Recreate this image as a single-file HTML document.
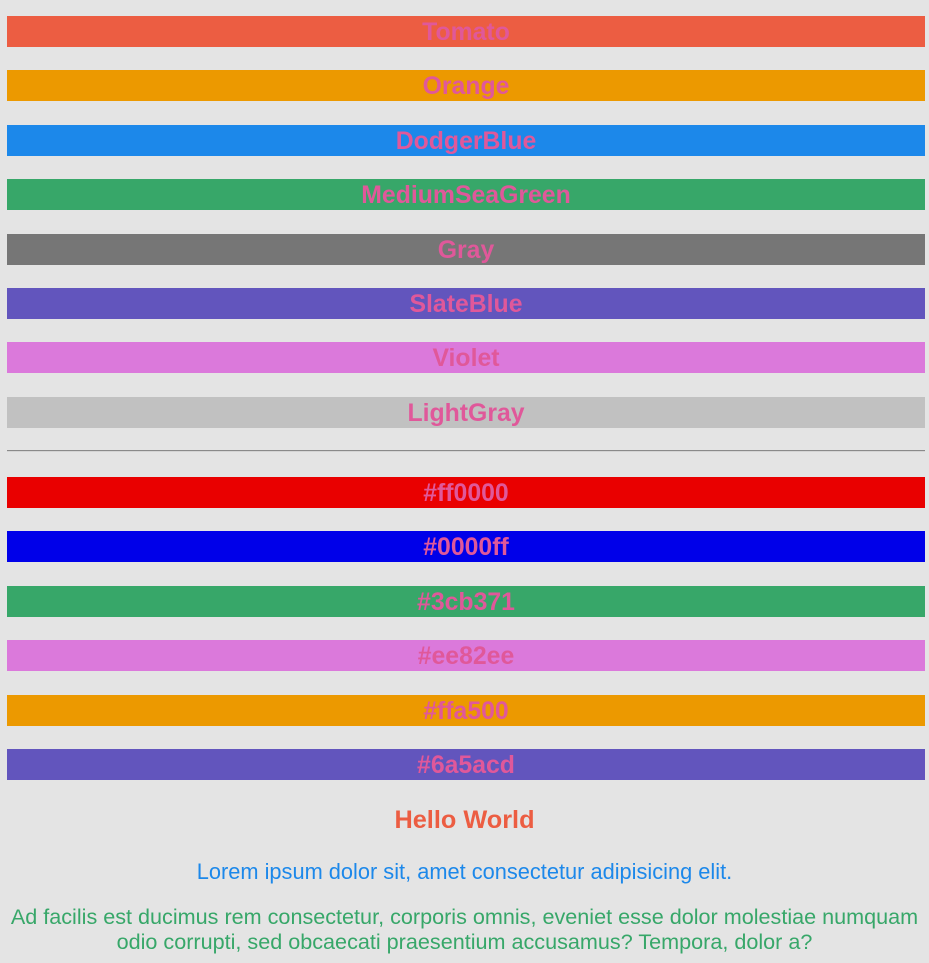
<!DOCTYPE html>
<html><head><meta charset="utf-8"><style>
html,body{margin:0;padding:0;background:#e4e4e4;width:929px;height:963px;overflow:hidden;font-family:"Liberation Sans",sans-serif;}
.b{position:absolute;left:7px;width:918px;height:31px;line-height:34px;text-align:center;font-weight:bold;font-size:24.8px;color:#e0589a;}
.t{position:absolute;left:0;width:929px;text-align:center;}
hr{position:absolute;left:7px;width:918px;top:450px;margin:0;border:0;border-top:1px solid #8a8a8a;border-bottom:1px solid #d4d4d4;height:0}
</style></head><body>
<div class="b" style="top:16px;background:#ec5d42">Tomato</div>
<div class="b" style="top:70px;background:#ec9900">Orange</div>
<div class="b" style="top:125px;background:#1c88ea">DodgerBlue</div>
<div class="b" style="top:179px;background:#37a769">MediumSeaGreen</div>
<div class="b" style="top:234px;background:#767676">Gray</div>
<div class="b" style="top:288px;background:#6255bd">SlateBlue</div>
<div class="b" style="top:342px;background:#db79db">Violet</div>
<div class="b" style="top:397px;background:#c1c1c1">LightGray</div>
<hr>
<div class="b" style="top:477px;background:#e90000">#ff0000</div>
<div class="b" style="top:531px;background:#0000e9">#0000ff</div>
<div class="b" style="top:586px;background:#37a769">#3cb371</div>
<div class="b" style="top:640px;background:#db79db">#ee82ee</div>
<div class="b" style="top:695px;background:#ec9900">#ffa500</div>
<div class="b" style="top:749px;background:#6255bd">#6a5acd</div>
<div class="t" style="top:806px;font-weight:bold;font-size:25.3px;color:#ec5d42">Hello World</div>
<div class="t" style="top:859px;font-size:21.8px;color:#1c88ea">Lorem ipsum dolor sit, amet consectetur adipisicing elit.</div>
<div class="t" style="top:904px;font-size:21.6px;line-height:25px;color:#37a769">Ad facilis est ducimus rem consectetur, corporis omnis, eveniet esse dolor molestiae numquam<br>odio corrupti, sed obcaecati praesentium accusamus? Tempora, dolor a?</div>
</body></html>
